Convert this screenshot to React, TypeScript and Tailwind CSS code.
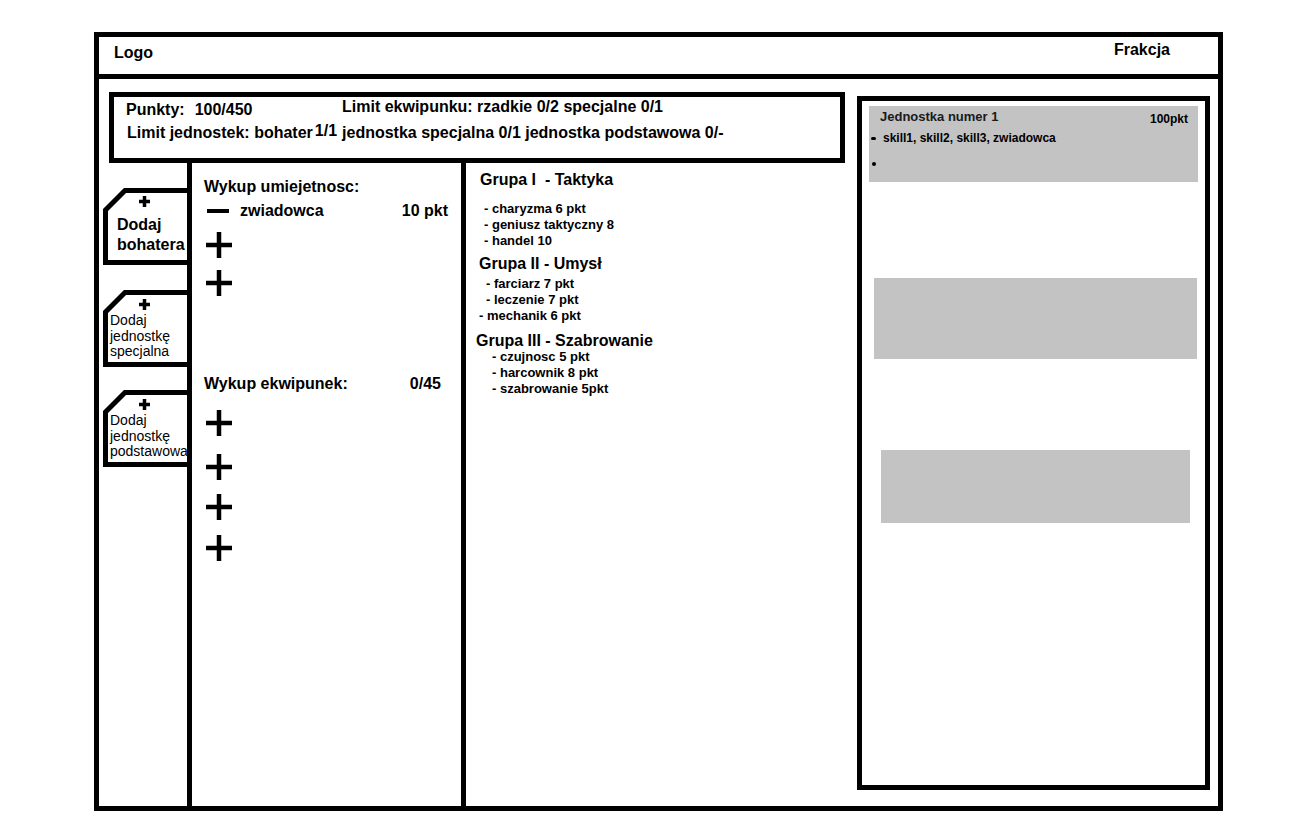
import React from "react";

const PlusBig = () => (
  <svg width="26" height="26" viewBox="0 0 26 26" className="block">
    <path d="M13 0V26M0 13H26" stroke="black" strokeWidth="4.5" />
  </svg>
);

const PlusSmall = () => (
  <svg width="11" height="11" viewBox="0 0 11 11" className="block">
    <path d="M5.5 0V11M0 5.5H11" stroke="black" strokeWidth="3.5" />
  </svg>
);

function Tab({ children, className = "" }: { children: React.ReactNode; className?: string }) {
  return (
    <div className={"relative ml-[4px] w-[84px] h-[77px] shrink-0 " + className}>
      <svg className="absolute inset-0" width="84" height="77" viewBox="0 0 84 77">
        <path d="M84 2.5H22L2.5 22V74.5H84" fill="none" stroke="black" strokeWidth="5" />
      </svg>
      <div className="relative flex flex-col">{children}</div>
    </div>
  );
}

const Item = ({ children, className = "" }: { children: React.ReactNode; className?: string }) => (
  <div className={"text-[13px] leading-[16px] font-bold whitespace-pre " + className}>{children}</div>
);

export default function App() {
  return (
    <div className="min-h-[824px] bg-white pt-[32px] pl-[94px] text-black font-['Liberation_Sans',Arial,sans-serif]">
      <div className="w-[1129px] h-[779px] border-[5px] border-black flex flex-col">
        {/* header */}
        <div className="h-[42px] shrink-0 border-b-[5px] border-black flex justify-between">
          <div className="pl-[15px] pt-[6px] text-[16px] leading-[20px] font-bold">Logo</div>
          <div className="pr-[48px] pt-[3px] text-[16px] leading-[20px] font-bold">Frakcja</div>
        </div>

        {/* body */}
        <div className="flex flex-1 min-h-0">
          {/* left area */}
          <div className="w-[758px] flex flex-col">
            {/* points box */}
            <div className="ml-[10px] mt-[13px] w-[736px] h-[71px] border-[5px] border-black shrink-0 text-[16px] leading-[20px] font-bold">
              <div className="flex pt-[3px] pl-[12px]">
                <div className="w-[216px] flex">
                  <span>Punkty:</span>
                  <span className="ml-[10px]">100/450</span>
                </div>
                <span className="-translate-y-[3px]">Limit ekwipunku: rzadkie 0/2 specjalne 0/1</span>
              </div>
              <div className="flex mt-[3px] pl-[13px]">
                <span>Limit jednostek: bohater</span>
                <span className="ml-[2px] -translate-y-[2px]">1/1</span>
                <span className="ml-[5px]">jednostka specjalna 0/1 jednostka podstawowa 0/-</span>
              </div>
            </div>

            {/* columns */}
            <div className="flex flex-1 min-h-0">
              {/* tabs column */}
              <div className="w-[88px] overflow-hidden flex flex-col pt-[25px]">
                <Tab>
                  <div className="pt-[8px] flex justify-center pr-[2px]">
                    <PlusSmall />
                  </div>
                  <div className="pl-[14px] mt-[8px] text-[16px] leading-[20px] font-bold whitespace-nowrap">
                    <div>Dodaj</div>
                    <div>bohatera</div>
                  </div>
                </Tab>
                <Tab className="mt-[25px]">
                  <div className="pt-[9px] flex justify-center pr-[2px]">
                    <PlusSmall />
                  </div>
                  <div className="pl-[7px] mt-[3px] text-[14px] leading-[15.5px] whitespace-nowrap">
                    <div>Dodaj</div>
                    <div>jednostkę</div>
                    <div>specjalna</div>
                  </div>
                </Tab>
                <Tab className="mt-[23px]">
                  <div className="pt-[9px] flex justify-center pr-[2px]">
                    <PlusSmall />
                  </div>
                  <div className="pl-[7px] mt-[3px] text-[14px] leading-[15.5px] whitespace-nowrap">
                    <div>Dodaj</div>
                    <div>jednostkę</div>
                    <div>podstawowa</div>
                  </div>
                </Tab>
              </div>

              {/* middle column */}
              <div className="w-[274px] border-l-[5px] border-black flex flex-col">
                <div className="pl-[12px] pt-[15px] text-[16px] leading-[18px] font-bold">Wykup umiejetnosc:</div>
                <div className="flex items-center h-[20px] mt-[5px] pl-[15px] pr-[13px] text-[16px] font-bold">
                  <div className="w-[22px] h-[4px] bg-black" />
                  <span className="ml-[11px]">zwiadowca</span>
                  <span className="ml-auto">10 pkt</span>
                </div>
                <div className="pl-[14px] mt-[11px]"><PlusBig /></div>
                <div className="pl-[14px] mt-[12px]"><PlusBig /></div>
                <div className="flex mt-[79px] pl-[12px] pr-[20px] text-[16px] leading-[18px] font-bold">
                  <span>Wykup ekwipunek:</span>
                  <span className="ml-auto">0/45</span>
                </div>
                <div className="pl-[14px] mt-[17px]"><PlusBig /></div>
                <div className="pl-[14px] mt-[18px]"><PlusBig /></div>
                <div className="pl-[14px] mt-[14px]"><PlusBig /></div>
                <div className="pl-[14px] mt-[15px]"><PlusBig /></div>
              </div>

              {/* skills column */}
              <div className="flex-1 border-l-[5px] border-black flex flex-col">
                <div className="pl-[14px] pt-[8px] text-[16px] leading-[18px] font-bold whitespace-pre">Grupa I  - Taktyka</div>
                <div className="mt-[12px]">
                  <Item className="pl-[18px]">- charyzma 6 pkt</Item>
                  <Item className="pl-[18px]">- geniusz taktyczny 8</Item>
                  <Item className="pl-[18px]">- handel 10</Item>
                </div>
                <div className="pl-[13px] mt-[6px] text-[16px] leading-[18px] font-bold">Grupa II - Umysł</div>
                <div className="mt-[3px]">
                  <Item className="pl-[20px]">- farciarz 7 pkt</Item>
                  <Item className="pl-[20px]">- leczenie 7 pkt</Item>
                  <Item className="pl-[13px]">- mechanik 6 pkt</Item>
                </div>
                <div className="pl-[10px] mt-[9px] text-[16px] leading-[16px] font-bold">Grupa III - Szabrowanie</div>
                <div>
                  <Item className="pl-[26px]">- czujnosc 5 pkt</Item>
                  <Item className="pl-[26px]">- harcownik 8 pkt</Item>
                  <Item className="pl-[26px]">- szabrowanie 5pkt</Item>
                </div>
              </div>
            </div>
          </div>

          {/* right panel */}
          <div className="w-[353px] mt-[17px] mb-[16px] border-[5px] border-black flex flex-col">
            <div className="mx-[7px] mt-[5px] h-[76px] bg-[#c3c3c3] flex flex-col">
              <div className="flex pt-[3px] pl-[11px] pr-[10px]">
                <span className="text-[13px] leading-[16px] font-bold text-[#1a1a1a]">Jednostka numer 1</span>
                <span className="ml-auto mt-[2px] text-[12px] leading-[16px] font-bold">100pkt</span>
              </div>
              <div className="flex items-center mt-[3px] pl-[2px]">
                <div className="w-[5px] h-[3px] rounded-full bg-black" />
                <span className="ml-[7px] text-[12px] leading-[16px] font-bold">skill1, skill2, skill3, zwiadowca</span>
              </div>
              <div className="mt-[16px] ml-[3px] w-[4px] h-[4px] rounded-full bg-black" />
            </div>
            <div className="ml-[12px] mr-[8px] mt-[96px] h-[81px] bg-[#c3c3c3]" />
            <div className="ml-[19px] mr-[15px] mt-[91px] h-[73px] bg-[#c3c3c3]" />
          </div>
        </div>
      </div>
    </div>
  );
}
